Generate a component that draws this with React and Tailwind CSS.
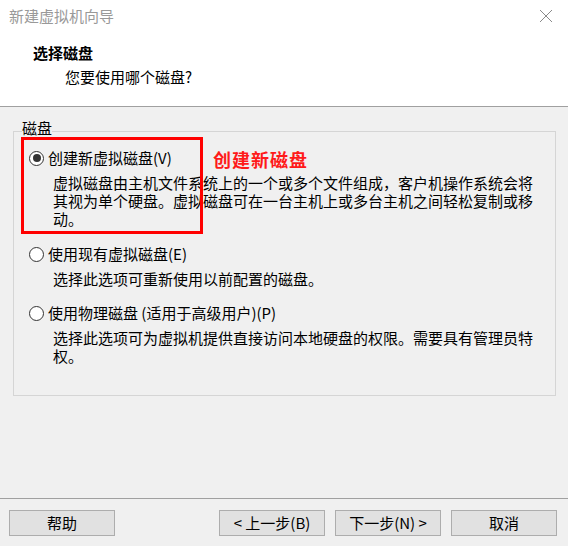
import React from 'react';

const font = {fontFamily: '"Noto Sans CJK SC", "Microsoft YaHei", sans-serif'};

function Radio({checked}) {
  return (
    <span className="w-[15px] h-[15px] rounded-full border border-[#333333] bg-white flex items-center justify-center shrink-0">
      {checked && <span className="w-[8px] h-[8px] rounded-full bg-[#333333]" />}
    </span>
  );
}

function Option({checked, label, lines, className = ''}) {
  return (
    <div className={className}>
      <div className="flex items-center h-[18px] leading-[18px] pl-[15px]">
        <Radio checked={checked} />
        <span className="ml-[4px]">{label}</span>
      </div>
      <div className="mt-[7px] pl-[39px] leading-[18px]">
        {lines.map((l, i) => (
          <div key={i} className="whitespace-nowrap">{l}</div>
        ))}
      </div>
    </div>
  );
}

function Button({children}) {
  return (
    <button className="w-[106px] h-[26px] bg-[#e1e1e1] border border-[#adadad] text-[15px] leading-[24px] text-black">
      {children}
    </button>
  );
}

export default function App() {
  return (
    <div className="relative w-[568px] h-[546px] bg-[#f0f0f0] flex flex-col text-[15px] text-black overflow-hidden" style={font}>
      {/* header */}
      <div className="bg-white h-[107px] border-b border-[#a0a0a0] shrink-0">
        <div className="h-[31px] flex items-center justify-between pl-[9px] pr-[15px]">
          <span className="text-[#999999] leading-[20px]">新建虚拟机向导</span>
          <svg width="14" height="14" viewBox="0 0 14 14" className="text-[#8a8a8a]">
            <path d="M1 1 L13 13 M13 1 L1 13" stroke="currentColor" strokeWidth="1" fill="none" />
          </svg>
        </div>
        <div className="pl-[33px] mt-[12px] font-bold leading-[20px]">选择磁盘</div>
        <div className="pl-[65px] mt-[4px] leading-[20px]">您要使用哪个磁盘?</div>
      </div>

      {/* body */}
      <div className="flex-1">
        <div className="relative ml-[13px] mt-[24px] w-[543px] h-[265px] border border-[#d5d5d5]">
          <span className="absolute -top-[13px] left-[8px] bg-[#f0f0f0] leading-[18px]">磁盘</span>
          <Option
            className="pt-[17px]"
            checked
            label="创建新虚拟磁盘(V)"
            lines={[
              '虚拟磁盘由主机文件系统上的一个或多个文件组成，客户机操作系统会将',
              '其视为单个硬盘。虚拟磁盘可在一台主机上或多台主机之间轻松复制或移',
              '动。',
            ]}
          />
          <Option
            className="mt-[17px]"
            label="使用现有虚拟磁盘(E)"
            lines={['选择此选项可重新使用以前配置的磁盘。']}
          />
          <Option
            className="mt-[16px]"
            label="使用物理磁盘 (适用于高级用户)(P)"
            lines={[
              '选择此选项可为虚拟机提供直接访问本地硬盘的权限。需要具有管理员特',
              '权。',
            ]}
          />
        </div>
      </div>

      {/* footer */}
      <div className="h-[48px] border-t border-[#a0a0a0] shrink-0 flex items-start pt-[11px] pl-[9px] pr-[11px]">
        <Button>帮助</Button>
        <div className="ml-auto flex gap-[10px]">
          <Button>&lt; 上一步(B)</Button>
          <Button>下一步(N) &gt;</Button>
          <Button>取消</Button>
        </div>
      </div>

      {/* annotation */}
      <div className="absolute left-[21px] top-[137px] w-[182px] h-[97px] border-[3px] border-[#ff0000]" />
      <span className="absolute left-[213px] top-[148px] text-[18px] leading-[22px] font-bold tracking-[1px] text-[#ff1a1a]">创建新磁盘</span>
    </div>
  );
}
